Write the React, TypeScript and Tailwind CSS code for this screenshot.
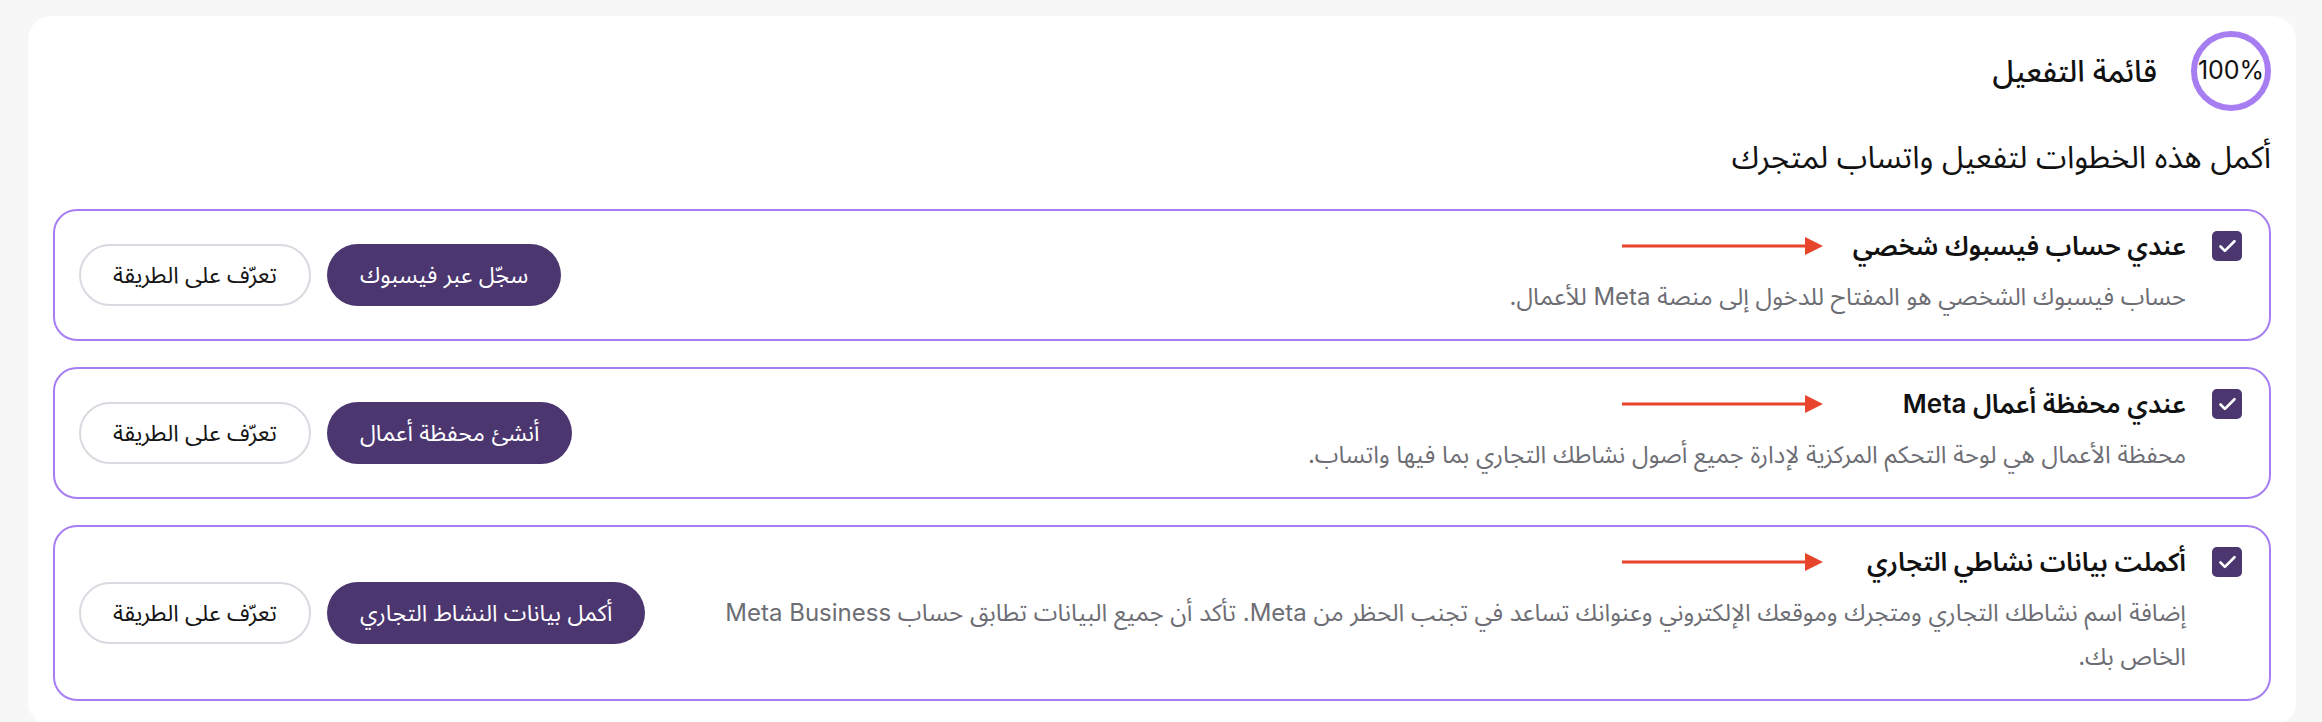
import { Check } from "lucide-react";

type Step = {
  title: string;
  description: string;
  action: string;
};

const steps: Step[] = [
  {
    title: "عندي حساب فيسبوك شخصي",
    description: "حساب فيسبوك الشخصي هو المفتاح للدخول إلى منصة Meta للأعمال.",
    action: "سجّل عبر فيسبوك",
  },
  {
    title: "عندي محفظة أعمال Meta",
    description:
      "محفظة الأعمال هي لوحة التحكم المركزية لإدارة جميع أصول نشاطك التجاري بما فيها واتساب.",
    action: "أنشئ محفظة أعمال",
  },
  {
    title: "أكملت بيانات نشاطي التجاري",
    description:
      "إضافة اسم نشاطك التجاري ومتجرك وموقعك الإلكتروني وعنوانك تساعد في تجنب الحظر من Meta. تأكد أن جميع البيانات تطابق حساب Meta Business الخاص بك.",
    action: "أكمل بيانات النشاط التجاري",
  },
];

function Pointer() {
  // red annotation arrow pointing at the step title
  return (
    <svg
      className="absolute top-[25px] right-[446px] w-[201px] h-[20px]"
      viewBox="0 0 201 20"
    >
      <line x1="0" y1="10" x2="186" y2="10" stroke="#e8432b" strokeWidth="3" />
      <polygon points="183,1 201,10 183,19" fill="#e8432b" />
    </svg>
  );
}

function StepCard({ step }: { step: Step }) {
  return (
    <div className="relative rounded-[24px] border-2 border-[#a67ef2] bg-white pt-[20px] pb-[20px] pr-[27px] pl-[24px] flex items-center gap-[24px]">
      <Pointer />
      <div className="flex-1 flex items-start gap-[26px]">
        <div className="w-[30px] h-[30px] shrink-0 rounded-[5px] bg-[#4b3670] flex items-center justify-center">
          <Check className="w-[21px] h-[21px] text-white" strokeWidth={3} />
        </div>
        <div className="flex-1">
          <h3 className="text-[26px] leading-[30px] font-semibold text-[#111]">
            {step.title}
          </h3>
          <p className="mt-[14px] text-[24px] leading-[44px] text-[#6d6d74]">
            {step.description}
          </p>
        </div>
      </div>
      <div className="flex items-center gap-4 shrink-0">
        <button className="h-[62px] rounded-full bg-[#4b3670] px-[33px] text-[23px] text-white">
          {step.action}
        </button>
        <button className="h-[62px] rounded-full border-2 border-[#dcd8e0] bg-white px-[32px] text-[23px] text-[#151515]">
          تعرّف على الطريقة
        </button>
      </div>
    </div>
  );
}

export default function App() {
  return (
    <div className="min-h-screen bg-[#f7f7f7] pt-4 pl-[28px] pr-[26px] font-['Inter','Noto_Sans_Arabic','DejaVu_Sans',sans-serif]">
      <div dir="rtl" className="rounded-[24px] bg-white px-[25px] pt-[15px] pb-[25px]">
        <div className="flex items-center gap-[34px]">
          <div className="w-20 h-20 rounded-full border-[6px] border-[#a77df2] flex items-center justify-center">
            <span dir="ltr" className="text-[25px] text-[#111]">
              100%
            </span>
          </div>
          <h2 className="text-[30px] font-medium text-[#111]">قائمة التفعيل</h2>
        </div>

        <p className="mt-[26px] text-[31px] leading-[40px] text-[#111]">
          أكمل هذه الخطوات لتفعيل واتساب لمتجرك
        </p>

        <div className="mt-[32px] flex flex-col gap-[26px]">
          {steps.map((step) => (
            <StepCard key={step.title} step={step} />
          ))}
        </div>
      </div>
    </div>
  );
}
